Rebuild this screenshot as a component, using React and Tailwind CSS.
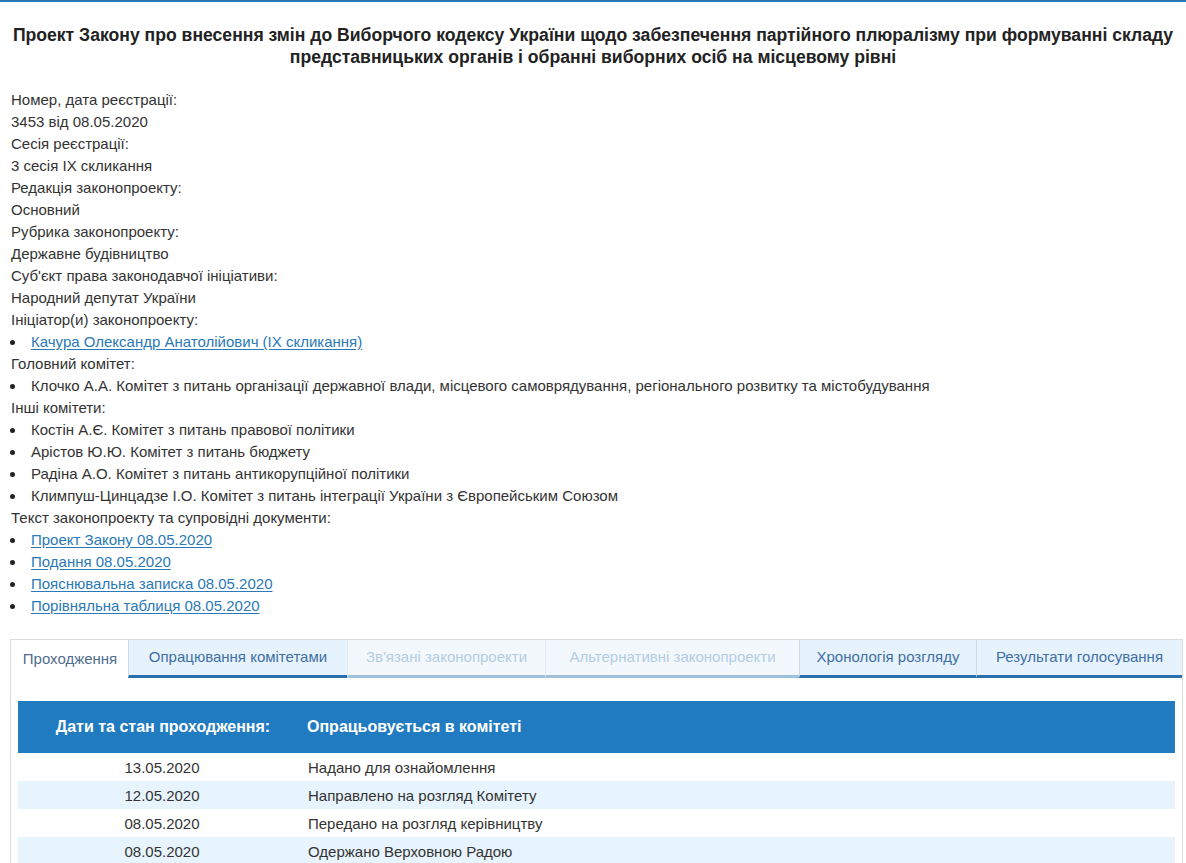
import React from 'react';

const info = [
    ['Номер, дата реєстрації:', '3453 від 08.05.2020'],
    ['Сесія реєстрації:', '3 сесія IX скликання'],
    ['Редакція законопроекту:', 'Основний'],
    ['Рубрика законопроекту:', 'Державне будівництво'],
    ["Суб'єкт права законодавчої ініціативи:", 'Народний депутат України'],
];

const others = [
    'Костін А.Є. Комітет з питань правової політики',
    'Арістов Ю.Ю. Комітет з питань бюджету',
    'Радіна А.О. Комітет з питань антикорупційної політики',
    'Климпуш-Цинцадзе І.О. Комітет з питань інтеграції України з Європейським Союзом',
];

const docs = [
    'Проект Закону 08.05.2020',
    'Подання 08.05.2020',
    'Пояснювальна записка 08.05.2020',
    'Порівняльна таблиця 08.05.2020',
];

const tabs = [
    { label: 'Проходження', w: 'w-[117px]', state: 'active' },
    { label: 'Опрацювання комітетами', w: 'w-[219px]', state: 'on' },
    { label: "Зв'язані законопроекти", w: 'w-[198px]', state: 'off' },
    { label: 'Альтернативні законопроекти', w: 'w-[254px]', state: 'off' },
    { label: 'Хронологія розгляду', w: 'w-[177px]', state: 'on' },
    { label: 'Результати голосування', w: 'flex-1', state: 'on' },
];

const rows = [
    ['13.05.2020', 'Надано для ознайомлення'],
    ['12.05.2020', 'Направлено на розгляд Комітету'],
    ['08.05.2020', 'Передано на розгляд керівництву'],
    ['08.05.2020', 'Одержано Верховною Радою'],
];

function Bullet({ children }) {
    return (
        <li className="flex items-center h-[22px]">
            <span className="w-[5px] h-[5px] rounded-full bg-[#222] ml-[10px] mr-[16px] shrink-0" />
            {children}
        </li>
    );
}

function Link({ children }) {
    return <a href="#" className="text-[#2a79b8] underline underline-offset-[2px]">{children}</a>;
}

export default function App() {
    return (
        <div className="min-h-[863px] bg-white border-t-2 border-[#2a7ab8] text-[15px] text-[#333] overflow-hidden" style={{ fontFamily: '"Liberation Sans", Arial, sans-serif' }}>
            {/* Title */}
            <h1 className="pt-[22px] px-[10px] text-center text-[17.6px] leading-[22px] font-bold text-[#222]">
                Проект Закону про внесення змін до Виборчого кодексу України щодо забезпечення партійного плюралізму при формуванні складу представницьких органів і обранні виборних осіб на місцевому рівні
            </h1>

            {/* Card info */}
            <div className="mt-[21px] pl-[11px] leading-[22px]">
                {info.map(([k, v]) => (
                    <div key={k}>
                        <div>{k}</div>
                        <div>{v}</div>
                    </div>
                ))}
                <div>Ініціатор(и) законопроекту:</div>
                <ul className="-ml-[11px]">
                    <Bullet><Link>Качура Олександр Анатолійович (IX скликання)</Link></Bullet>
                </ul>
                <div>Головний комітет:</div>
                <ul className="-ml-[11px]">
                    <Bullet>Клочко А.А. Комітет з питань організації державної влади, місцевого самоврядування, регіонального розвитку та містобудування</Bullet>
                </ul>
                <div>Інші комітети:</div>
                <ul className="-ml-[11px]">
                    {others.map((o) => <Bullet key={o}>{o}</Bullet>)}
                </ul>
                <div>Текст законопроекту та супровідні документи:</div>
                <ul className="-ml-[11px]">
                    {docs.map((d) => <Bullet key={d}><Link>{d}</Link></Bullet>)}
                </ul>
            </div>

            {/* Tabs panel */}
            <div className="mt-[22px] ml-[10px] mr-[3px] border border-[#dcdcdc] border-b-0 pb-[20px]">
                <div className="flex">
                    {tabs.map((t) => (
                        <div
                            key={t.label}
                            className={
                                t.w + ' h-[38px] flex items-center justify-center border-l ' +
                                (t.state === 'active'
                                    ? 'bg-white text-[#4f6d8f] border-transparent'
                                    : t.state === 'on'
                                        ? 'bg-[#e7f3fc] text-[#3f6fa5] border-[#d0dbe5] border-b-[3px] border-b-[#2a6fae]'
                                        : 'bg-[#f3f8fd] text-[#b3cde3] border-[#e2ebf2] border-b-[3px] border-b-[#a0c1dc]')
                            }
                        >
                            {t.label}
                        </div>
                    ))}
                </div>

                <div className="mt-[23px] mx-[7px]">
                    <div className="grid grid-cols-[288px_1fr] h-[52px] items-center bg-[#217bc1] text-white font-bold text-[16px]">
                        <div className="text-center pl-[2px]">Дати та стан проходження:</div>
                        <div className="pl-[1px]">Опрацьовується в комітеті</div>
                    </div>
                    {rows.map(([d, s], i) => (
                        <div key={i} className={'grid grid-cols-[288px_1fr] h-[28px] items-center pt-[3px] ' + (i % 2 ? 'bg-[#e7f3fd]' : 'bg-white')}>
                            <div className="text-center">{d}</div>
                            <div className="pl-[2px]">{s}</div>
                        </div>
                    ))}
                </div>
            </div>
        </div>
    );
}
